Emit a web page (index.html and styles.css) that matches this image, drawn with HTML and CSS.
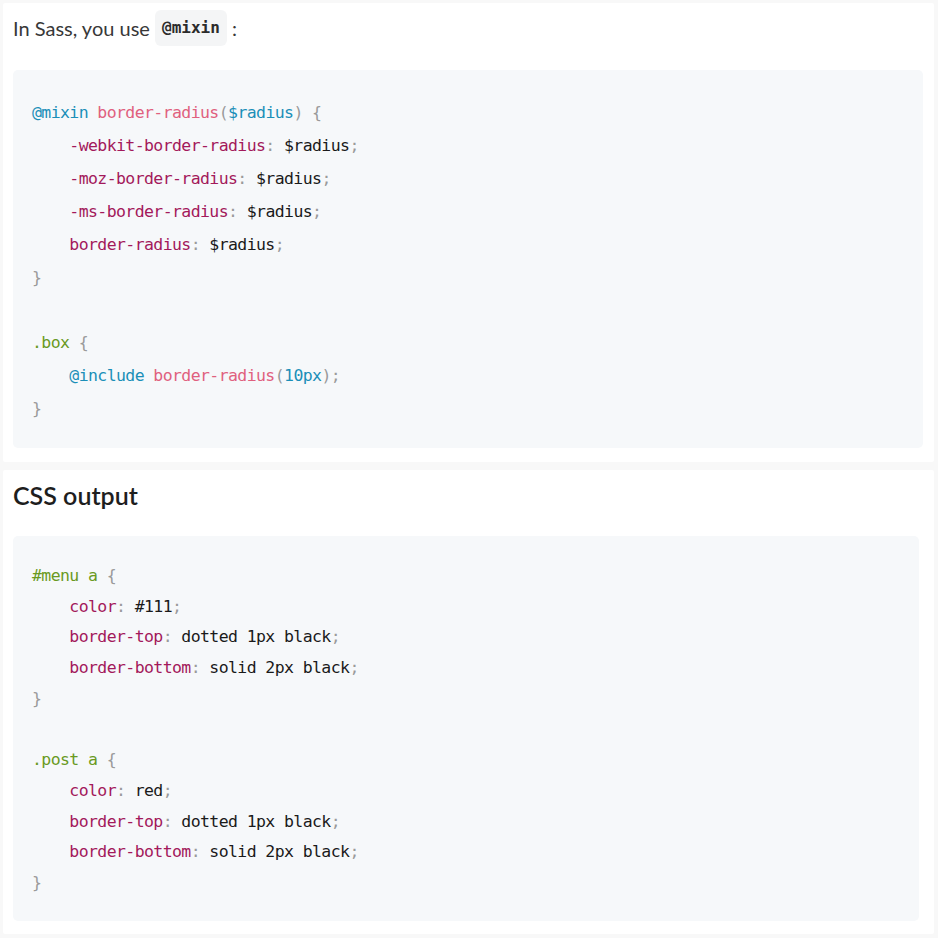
FILE: index.html
```html
<!DOCTYPE html>
<html lang="en">
<head>
<meta charset="utf-8">
<title>Sass mixin</title>
<link rel="stylesheet" href="styles.css">
</head>
<body>
<div class="page">
  <section class="panel panel-a">
    <p class="intro">In Sass, you use <code class="inline">@mixin</code> :</p>
<pre class="code code-a"><span class="kw">@mixin</span> <span class="fn">border-radius</span><span class="pu">(</span><span class="kw">$radius</span><span class="pu">)</span> <span class="pu">{</span>
    <span class="pr">-webkit-border-radius</span><span class="pu">:</span> $radius<span class="pu">;</span>
    <span class="pr">-moz-border-radius</span><span class="pu">:</span> $radius<span class="pu">;</span>
    <span class="pr">-ms-border-radius</span><span class="pu">:</span> $radius<span class="pu">;</span>
    <span class="pr">border-radius</span><span class="pu">:</span> $radius<span class="pu">;</span>
<span class="pu">}</span>

<span class="se">.box</span> <span class="pu">{</span>
    <span class="kw">@include</span> <span class="fn">border-radius</span><span class="pu">(</span><span class="kw">10px</span><span class="pu">);</span>
<span class="pu">}</span></pre>
  </section>
  <section class="panel panel-b">
    <h2 class="heading">CSS output</h2>
<pre class="code code-b"><span class="se">#menu a</span> <span class="pu">{</span>
    <span class="pr">color</span><span class="pu">:</span> #111<span class="pu">;</span>
    <span class="pr">border-top</span><span class="pu">:</span> dotted 1px black<span class="pu">;</span>
    <span class="pr">border-bottom</span><span class="pu">:</span> solid 2px black<span class="pu">;</span>
<span class="pu">}</span>

<span class="se">.post a</span> <span class="pu">{</span>
    <span class="pr">color</span><span class="pu">:</span> red<span class="pu">;</span>
    <span class="pr">border-top</span><span class="pu">:</span> dotted 1px black<span class="pu">;</span>
    <span class="pr">border-bottom</span><span class="pu">:</span> solid 2px black<span class="pu">;</span>
<span class="pu">}</span></pre>
  </section>
</div>
</body>
</html>
```
FILE: styles.css
```css
html, body {
  margin: 0;
  padding: 0;
  background: #f8f8f8;
}

.page {
  width: 931px;
  padding: 3px 4px 4px 3px;
  display: flex;
  flex-direction: column;
  gap: 8px;
}

.panel {
  background: #ffffff;
  border-radius: 2px;
}

.panel-a {
  padding: 5px 11px 14px 10px;
}

.panel-b {
  padding: 5px 15px 13px 10px;
}

.intro {
  margin: 0 0 22px 0;
  font-family: "Lato", "Liberation Sans", sans-serif;
  font-size: 20px;
  line-height: 40px;
  color: #383838;
}

.inline {
  display: inline-block;
  font-family: "DejaVu Sans Mono", monospace;
  font-size: 16px;
  font-weight: bold;
  letter-spacing: 0;
  line-height: 36px;
  padding: 0 7px;
  border-radius: 6px;
  background: #f4f5f6;
  color: #2b2b2b;
  vertical-align: top;
  margin-top: 2px;
}

.heading {
  margin: 0 0 21px 0;
  font-family: "Lato", "Liberation Sans", sans-serif;
  font-size: 25px;
  font-weight: 600;
  line-height: 40px;
  color: #1e1e1e;
}

.code {
  margin: 0;
  background: #f6f8fa;
  border-radius: 5px;
  font-family: "DejaVu Sans Mono", monospace;
  font-size: 16.5px;
  letter-spacing: -0.6px;
  color: #1a1a1a;
  padding-left: 19px;
}

.code-a {
  line-height: 32.9px;
  padding-top: 27px;
  padding-bottom: 22px;
}

.code-b {
  line-height: 30.7px;
  padding-top: 25px;
  padding-bottom: 22px;
}

.kw { color: #1b8fb8; }
.fn { color: #e0607e; }
.pr { color: #a3195b; }
.se { color: #6a9a1f; }
.pu { color: #9a9a9a; }
```
